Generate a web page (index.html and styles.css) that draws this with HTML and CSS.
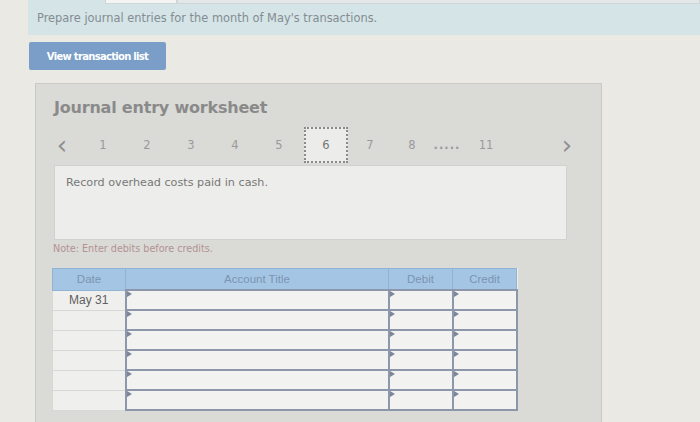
FILE: index.html
```html
<!DOCTYPE html>
<html lang="en">
<head>
    <meta charset="UTF-8">
    <meta name="viewport" content="width=device-width, initial-scale=1.0">
    <title>Journal entry worksheet</title>
    <link rel="stylesheet" href="styles.css">
</head>
<body>
    <div class="page">
        <div class="tabs">
            <span class="tab tab-active"></span>
            <span class="tab"></span>
        </div>
        <div class="banner">Prepare journal entries for the month of May's transactions.</div>

        <button class="btn-list">View transaction list</button>

        <div class="panel">
            <h2 class="panel-title">Journal entry worksheet</h2>

            <div class="steps">
                <span class="arrow">&lsaquo;</span>
                <span class="step">1</span>
                <span class="step">2</span>
                <span class="step">3</span>
                <span class="step">4</span>
                <span class="step">5</span>
                <span class="step step-current">6</span>
                <span class="step">7</span>
                <span class="step step-narrow">8</span>
                <span class="step step-dots">.....</span>
                <span class="step step-wide">11</span>
                <span class="spacer"></span>
                <span class="arrow">&rsaquo;</span>
            </div>

            <div class="task">Record overhead costs paid in cash.</div>

            <p class="note">Note: Enter debits before credits.</p>

            <table class="journal">
                <thead>
                    <tr>
                        <th class="col-date">Date</th>
                        <th class="col-title">Account Title</th>
                        <th class="col-debit">Debit</th>
                        <th class="col-credit">Credit</th>
                    </tr>
                </thead>
                <tbody>
                    <tr>
                        <td class="date">May 31</td>
                        <td class="input"></td>
                        <td class="input"></td>
                        <td class="input"></td>
                    </tr>
                    <tr>
                        <td class="date"></td>
                        <td class="input"></td>
                        <td class="input"></td>
                        <td class="input"></td>
                    </tr>
                    <tr>
                        <td class="date"></td>
                        <td class="input"></td>
                        <td class="input"></td>
                        <td class="input"></td>
                    </tr>
                    <tr>
                        <td class="date"></td>
                        <td class="input"></td>
                        <td class="input"></td>
                        <td class="input"></td>
                    </tr>
                    <tr>
                        <td class="date"></td>
                        <td class="input"></td>
                        <td class="input"></td>
                        <td class="input"></td>
                    </tr>
                    <tr>
                        <td class="date"></td>
                        <td class="input"></td>
                        <td class="input"></td>
                        <td class="input"></td>
                    </tr>
                </tbody>
            </table>
        </div>
    </div>
</body>
</html>
```

FILE: styles.css
```css
body {
    margin: 0;
    background-color: #ebe9e4;
    font-family: "DejaVu Sans", Verdana, sans-serif;
    height: 422px;
    overflow: hidden;
}
.page {
    padding-left: 28px;
}
.tabs {
    display: flex;
    height: 4px;
    background: #d4e4e7;
}
.tab {
    width: 70px;
    margin-left: 77px;
    background: #f4f4f2;
    border: 1px solid #cfd6d8;
    border-top: none;
}
.tab + .tab {
    margin-left: 0;
    flex: 1;
    background: #e4e7e7;
}
.banner {
    height: 31px;
    line-height: 29px;
    padding-left: 9px;
    background-color: #d4e4e7;
    color: #858c91;
    font-size: 11.4px;
}
.btn-list {
    display: block;
    margin: 7px 0 0 1px;
    width: 137px;
    height: 28px;
    border: none;
    border-radius: 2px;
    background-color: #7a9ec8;
    color: #fff;
    font-family: "DejaVu Sans", Verdana, sans-serif;
    font-size: 10px;
    font-weight: bold;
    letter-spacing: -0.7px;
}
.panel {
    margin: 13px 0 0 7px;
    width: 548px;
    height: 340px;
    padding: 0 0 0 17px;
    background-color: #dadad7;
    border: 1px solid #c9c9c6;
}
.panel-title {
    margin: 14px 0 0 1px;
    font-size: 16px;
    font-weight: bold;
    color: #8a8a8a;
    letter-spacing: -0.2px;
}
.steps {
    display: flex;
    align-items: center;
    height: 36px;
    margin-top: 10px;
    color: #9a9a9a;
    font-size: 11.5px;
}
.arrow {
    width: 14px;
    margin: 0 12px 0 2px;
    font-size: 26px;
    line-height: 36px;
    color: #8f8f8f;
    text-align: center;
}
.step {
    width: 44px;
    text-align: center;
}
.step-current {
    box-sizing: border-box;
    height: 36px;
    line-height: 32px;
    margin-left: 3px;
    border: 2px dotted #8a8a8a;
    background: #ececea;
    color: #777;
}
.step-narrow {
    width: 40px;
}
.step-dots {
    width: 30px;
    font-weight: bold;
    letter-spacing: 1px;
}
.step-wide {
    width: 48px;
}
.spacer {
    flex: 1;
}
.steps .arrow:last-child {
    margin: 0 27px 0 0;
}
.task {
    box-sizing: border-box;
    width: 513px;
    height: 75px;
    margin: 2px 0 0 1px;
    padding: 10px 11px;
    background-color: #ededeb;
    border: 1px solid #d1d1cd;
    color: #787878;
    font-size: 11.2px;
}
.note {
    margin: 3px 0 0 0;
    color: #b39292;
    font-size: 9.6px;
}
.journal {
    table-layout: fixed;
    width: 463px;
    margin-top: 14px;
    margin-left: -1px;
    border-collapse: collapse;
    background: #eeeeec;
    font-family: "Liberation Sans", Arial, sans-serif;
    font-size: 11.5px;
}
.journal th {
    height: 20px;
    padding: 0;
    background-color: #a4c6e4;
    border: 1px solid #92b4d4;
    color: #7c93b3;
    font-weight: normal;
}
.col-date {
    width: 72px;
}
.col-title {
    width: 262px;
}
.col-debit {
    width: 63px;
}
.col-credit {
    width: 63px;
}
.journal td {
    height: 18px;
    padding: 0;
}
.date {
    border: 1px solid #d8d8d5;
    text-align: center;
    color: #5f5f5f;
    font-size: 12px;
    background: #efefed;
}
.input {
    position: relative;
    border: 2px solid #8c97ab;
    background: #f2f2f0;
}
.input::before {
    content: "";
    position: absolute;
    top: 0;
    left: 0;
    border-top: 3px solid transparent;
    border-bottom: 3px solid transparent;
    border-left: 5px solid #7d8598;
}
```
